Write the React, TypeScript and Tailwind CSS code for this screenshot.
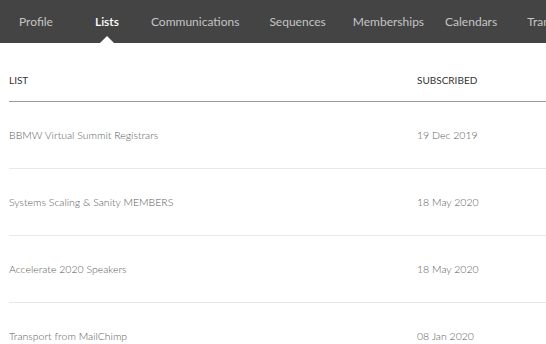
const tabs = [
  { label: "Profile", gap: "ml-[19px]" },
  { label: "Lists", gap: "ml-[42px]" },
  { label: "Communications", gap: "ml-[32px]" },
  { label: "Sequences", gap: "ml-[30px]" },
  { label: "Memberships", gap: "ml-[27px]" },
  { label: "Calendars", gap: "ml-[21px]" },
  { label: "Transactions", gap: "ml-[30px]" },
];

const rows = [
  { name: "BBMW Virtual Summit Registrars", date: "19 Dec 2019" },
  { name: "Systems Scaling & Sanity MEMBERS", date: "18 May 2020" },
  { name: "Accelerate 2020 Speakers", date: "18 May 2020" },
  { name: "Transport from MailChimp", date: "08 Jan 2020" },
];

export default function App() {
  return (
    <div className="h-[344px] w-[546px] overflow-hidden bg-white font-['Lato','Open_Sans',sans-serif]">
      <nav className="flex h-[43px] items-center overflow-hidden whitespace-nowrap bg-[#444444] text-[12px]">
        {tabs.map((t) => {
          const active = t.label === "Lists";
          return (
            <div
              key={t.label}
              className={`relative flex h-full shrink-0 items-center ${t.gap} ${
                active ? "font-semibold text-white" : "text-[#c4c4c4]"
              }`}
            >
              {t.label}
              {active ? (
                <span className="absolute bottom-0 left-1/2 h-0 w-0 -translate-x-1/2 border-x-[7px] border-b-[7px] border-x-transparent border-b-white" />
              ) : null}
            </div>
          );
        })}
      </nav>

      <div className="ml-[9px]">
        <div className="flex h-[59px] items-end border-b border-[#999999] pb-[13px] text-[10px] text-[#333333]">
          <div className="w-[408px]">LIST</div>
          <div>SUBSCRIBED</div>
        </div>
        {rows.map((r) => (
          <div
            key={r.name}
            className="flex h-[67px] items-center border-b border-[#e8e8e8] pt-[2px] text-[10.5px] font-light text-[#5a5a5a]"
          >
            <div className="w-[408px]">{r.name}</div>
            <div>{r.date}</div>
          </div>
        ))}
      </div>
    </div>
  );
}
